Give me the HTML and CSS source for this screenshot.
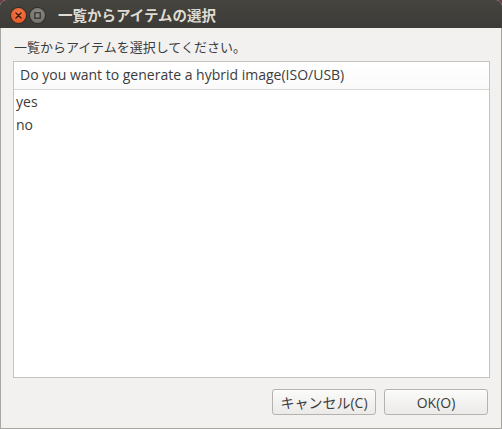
FILE: index.html
```html
<!DOCTYPE html>
<html lang="ja">
<head>
<meta charset="utf-8">
<link rel="stylesheet" href="styles.css">
</head>
<body>
<div class="window">
  <div class="titlebar">
    <div class="controls">
      <span class="btn-close">
        <svg width="15" height="15" viewBox="0 0 15 15"><path d="M5 5 L10 10 M10 5 L5 10" stroke="#3a1a0a" stroke-width="1.4" stroke-linecap="round"/></svg>
      </span>
      <span class="btn-min">
        <svg width="15" height="15" viewBox="0 0 15 15"><rect x="4.8" y="4.8" width="5.4" height="5.4" fill="none" stroke="#2f2f2c" stroke-width="1.2"/></svg>
      </span>
    </div>
    <div class="title">一覧からアイテムの選択</div>
  </div>
  <div class="content">
    <div class="prompt">一覧からアイテムを選択してください。</div>
    <div class="listbox">
      <div class="header">Do you want to generate a hybrid image(ISO/USB)</div>
      <div class="row">yes</div>
      <div class="row">no</div>
    </div>
    <div class="buttons">
      <button class="button">キャンセル(C)</button>
      <button class="button">OK(O)</button>
    </div>
  </div>
</div>
</body>
</html>
```
FILE: styles.css
```css
html, body {
  margin: 0;
  padding: 0;
  background: #6e3a4a;
}
body {
  width: 502px;
  height: 429px;
  overflow: hidden;
  font-family: "Open Sans", "Noto Sans CJK JP", sans-serif;
}
.window {
  width: 502px;
  height: 429px;
  box-sizing: border-box;
  display: flex;
  flex-direction: column;
  border-radius: 6px 6px 0 0;
  overflow: hidden;
  background: #f2f1f0;
}
.titlebar {
  height: 28px;
  flex: none;
  display: flex;
  align-items: center;
  background: linear-gradient(#45443f, #3c3b37);
  color: #dfdbd2;
}
.controls {
  display: flex;
  gap: 4px;
  padding-left: 11px;
  padding-top: 3px;
}
.btn-close, .btn-min {
  width: 15px;
  height: 15px;
  border-radius: 50%;
  display: flex;
}
.btn-close {
  background: radial-gradient(circle at 50% 35%, #f47a4a, #e1501e);
  box-shadow: 0 0 0 1px #3a2a22;
}
.btn-min {
  background: radial-gradient(circle at 50% 35%, #8d8b84, #6e6c66);
  box-shadow: 0 0 0 1px #302f2b;
}
.title {
  margin-left: 13px;
  font-family: "Noto Sans CJK JP", sans-serif;
  font-size: 14.5px;
  font-weight: bold;
  color: #dfdbd2;
}
.content {
  flex: 1;
  display: flex;
  flex-direction: column;
  border: 1px solid #a8a7a3;
  border-top: none;
  padding: 0 11px 13px 12px;
}
.prompt {
  font-family: "Noto Sans CJK JP", sans-serif;
  font-size: 13px;
  color: #3c3c3c;
  height: 33px;
  line-height: 38px;
  padding-left: 1px;
}
.listbox {
  flex: 1;
  background: #ffffff;
  border: 1px solid #c6c4c1;
  display: flex;
  flex-direction: column;
}
.header {
  height: 27px;
  line-height: 26px;
  padding-left: 6px;
  border-bottom: 1px solid #d9d7d4;
  background: linear-gradient(#ffffff, #fafafa);
  font-size: 14px;
  color: #3c3c3c;
}
.row {
  height: 23px;
  line-height: 23px;
  padding-left: 2px;
  font-size: 14px;
  color: #3c3c3c;
}
.buttons {
  display: flex;
  justify-content: flex-end;
  gap: 8px;
  margin-top: 11px;
  padding-right: 2px;
}
.button {
  width: 104px;
  height: 26px;
  border: 1px solid #b5b3b0;
  border-radius: 3px;
  background: linear-gradient(#fbfbfa, #ebeae8);
  font-family: "Open Sans", "Noto Sans CJK JP", sans-serif;
  font-size: 14px;
  color: #3c3c3c;
  padding: 0;
}
```
